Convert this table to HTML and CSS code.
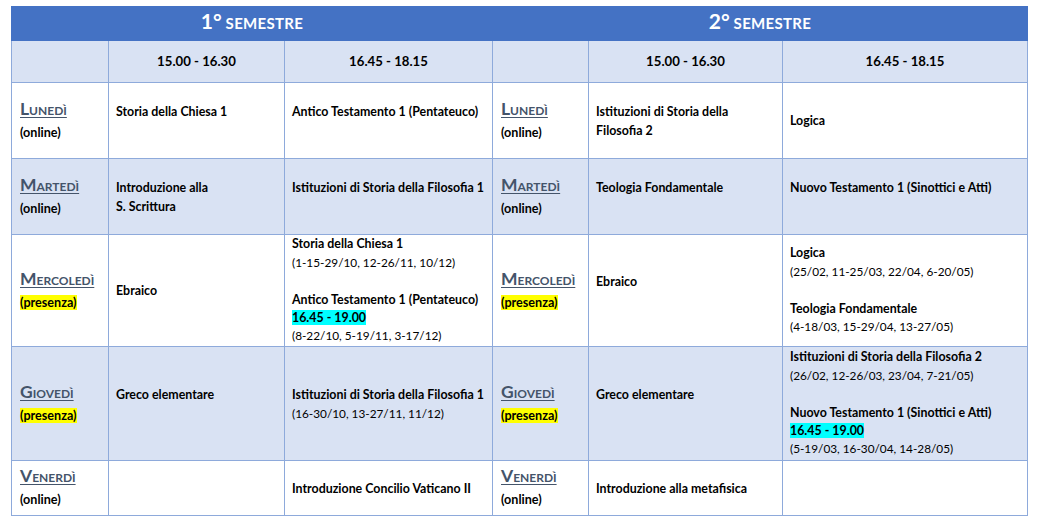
FILE: index.html
```html
<!DOCTYPE html>
<html lang="it">
<head>
<meta charset="utf-8">
<title>Orario</title>
<link rel="stylesheet" href="styles.css">
</head>
<body>
<table class="sched">
  <colgroup>
    <col class="w1"><col class="w2"><col class="w3"><col class="w4"><col class="w5"><col class="w6">
  </colgroup>
  <tr class="r-sem">
    <th colspan="3"><span class="num">1°</span> <span class="sem">SEMESTRE</span></th>
    <th colspan="3"><span class="num">2°</span> <span class="sem">SEMESTRE</span></th>
  </tr>
  <tr class="r-time shade">
    <td></td><td class="time">15.00 - 16.30</td><td class="time">16.45 - 18.15</td>
    <td></td><td class="time">15.00 - 16.30</td><td class="time">16.45 - 18.15</td>
  </tr>
  <tr class="r-lun">
    <td class="day"><span class="dname">Lunedì</span><br><span class="mode">(online)</span></td>
    <td>Storia della Chiesa 1<br>&nbsp;</td>
    <td>Antico Testamento 1 (Pentateuco)<br>&nbsp;</td>
    <td class="day"><span class="dname">Lunedì</span><br><span class="mode">(online)</span></td>
    <td>Istituzioni di Storia della<br>Filosofia 2</td>
    <td>Logica</td>
  </tr>
  <tr class="r-mar shade">
    <td class="day"><span class="dname">Martedì</span><br><span class="mode">(online)</span></td>
    <td>Introduzione alla<br>S. Scrittura</td>
    <td>Istituzioni di Storia della Filosofia 1<br>&nbsp;</td>
    <td class="day"><span class="dname">Martedì</span><br><span class="mode">(online)</span></td>
    <td>Teologia Fondamentale<br>&nbsp;</td>
    <td>Nuovo Testamento 1 (Sinottici e Atti)<br>&nbsp;</td>
  </tr>
  <tr class="r-mer">
    <td class="day"><span class="dname">Mercoledì</span><br><span class="mode hl">(presenza)</span></td>
    <td>Ebraico</td>
    <td class="multi">Storia della Chiesa 1<br><span class="dates">(1-15-29/10, 12-26/11, 10/12)</span><br>&nbsp;<br>Antico Testamento 1 (Pentateuco)<br><span class="cy">16.45 - 19.00</span><br><span class="dates">(8-22/10, 5-19/11, 3-17/12)</span></td>
    <td class="day"><span class="dname">Mercoledì</span><br><span class="mode hl">(presenza)</span></td>
    <td>Ebraico<br>&nbsp;</td>
    <td class="multi">Logica<br><span class="dates">(25/02, 11-25/03, 22/04, 6-20/05)</span><br>&nbsp;<br>Teologia Fondamentale<br><span class="dates">(4-18/03, 15-29/04, 13-27/05)</span></td>
  </tr>
  <tr class="r-gio shade">
    <td class="day"><span class="dname">Giovedì</span><br><span class="mode hl">(presenza)</span></td>
    <td>Greco elementare<br>&nbsp;</td>
    <td>Istituzioni di Storia della Filosofia 1<br><span class="dates">(16-30/10, 13-27/11, 11/12)</span></td>
    <td class="day"><span class="dname">Giovedì</span><br><span class="mode hl">(presenza)</span></td>
    <td>Greco elementare<br>&nbsp;</td>
    <td class="multi">Istituzioni di Storia della Filosofia 2<br><span class="dates">(26/02, 12-26/03, 23/04, 7-21/05)</span><br>&nbsp;<br>Nuovo Testamento 1 (Sinottici e Atti)<br><span class="cy">16.45 - 19.00</span><br><span class="dates">(5-19/03, 16-30/04, 14-28/05)</span></td>
  </tr>
  <tr class="r-ven">
    <td class="day"><span class="dname">Venerdì</span><br><span class="mode">(online)</span></td>
    <td></td>
    <td>Introduzione Concilio Vaticano II</td>
    <td class="day"><span class="dname">Venerdì</span><br><span class="mode">(online)</span></td>
    <td>Introduzione alla metafisica</td>
    <td></td>
  </tr>
</table>
</body>
</html>
```
FILE: styles.css
```css
html, body {
  margin: 0;
  padding: 0;
  background: #ffffff;
}
body {
  padding: 6px 0 0 11px;
  font-family: Lato, "Open Sans", sans-serif;
  color: #000;
}
.sched {
  border-collapse: collapse;
  table-layout: fixed;
  width: 1016px;
}
.w1 { width: 97px; }
.w2 { width: 176px; }
.w3 { width: 208px; }
.w4 { width: 96px; }
.w5 { width: 194px; }
.w6 { width: 245px; }

.sched td {
  border: 1px solid #8eaadb;
  padding: 0 4px 0 7px;
  vertical-align: middle;
  font-size: 12.4px;
  font-weight: 700;
  line-height: 19px;
  text-align: left;
  white-space: nowrap;
}
.sched td.multi {
  line-height: 18.4px;
}
.sched th {
  background: #4472c4;
  color: #ffffff;
  border: 1px solid #4472c4;
  padding: 0 0 3px 0;
  height: 30px;
  text-align: center;
  vertical-align: middle;
  font-weight: 700;
  line-height: 20px;
}
.num {
  font-size: 21px;
}
.sem {
  font-size: 15px;
  letter-spacing: 0.3px;
}
.shade td { background: #d9e2f3; }
.r-time td { height: 41px; }
.sched td.time {
  text-align: center;
  font-size: 13.2px;
  padding: 0;
}
.r-lun td { height: 75px; }
.r-mar td { height: 75px; }
.r-mer td { height: 111px; }
.r-gio td { height: 113px; }
.r-ven td { height: 54px; }

.sched td.day {
  padding-left: 8px;
  line-height: 22px;
}
.dname {
  font-variant: small-caps;
  font-size: 17.5px;
  font-weight: 700;
  color: #44546a;
  text-decoration: underline;
  text-decoration-thickness: 1px;
  text-underline-offset: 2px;
}
.mode {
  font-size: 12.6px;
  font-weight: 700;
}
.hl { background: #ffff00; }
.cy { background: #00ffff; }
.dates {
  font-weight: 400;
  font-size: 11.8px;
}
```
